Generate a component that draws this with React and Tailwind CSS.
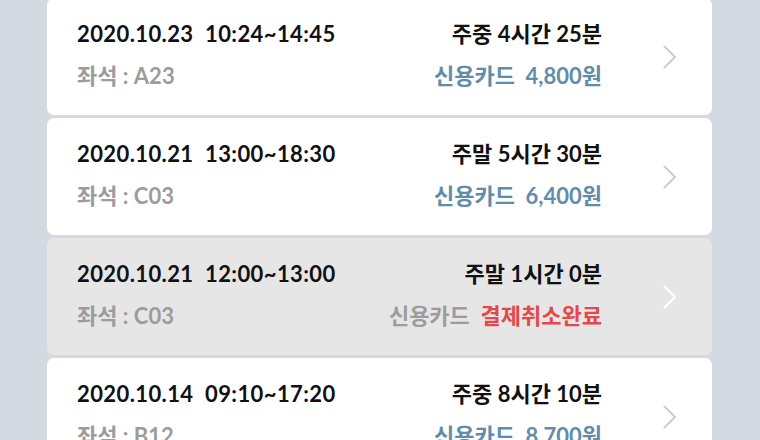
const rows = [
  { date: "2020.10.23", time: "10:24~14:45", seat: "A23", dur: "주중 4시간 25분", price: "4,800원" },
  { date: "2020.10.21", time: "13:00~18:30", seat: "C03", dur: "주말 5시간 30분", price: "6,400원" },
  { date: "2020.10.21", time: "12:00~13:00", seat: "C03", dur: "주말 1시간 0분", canceled: true },
  { date: "2020.10.14", time: "09:10~17:20", seat: "B12", dur: "주중 8시간 10분", price: "8,700원" },
];

function Chevron({ color }) {
  return (
    <svg width="14" height="24" viewBox="0 0 14 24" fill="none" className={color}>
      <polyline points="1.5,1.5 12,12 1.5,22.5" stroke="currentColor" strokeWidth="2" strokeLinecap="round" strokeLinejoin="round" />
    </svg>
  );
}

function UsageRow({ row }) {
  return (
    <div
      className={
        "flex items-center h-[117px] rounded-[7px] pl-[30px] pr-[35px] " +
        (row.canceled ? "bg-[#e6e6e6]" : "bg-white")
      }
    >
      <div className="flex-1 flex flex-col gap-[16px] pb-[3px]">
        <div className="flex justify-between text-[22px] font-bold text-[#111] leading-[26px]">
          <span className="whitespace-pre tracking-[0.4px]">{row.date + "  " + row.time}</span>
          <span>{row.dur}</span>
        </div>
        <div className="flex justify-between text-[22px] font-bold leading-[26px]">
          <span className="text-[#9c9c9c]">좌석 : {row.seat}</span>
          {row.canceled ? (
            <span className="whitespace-pre">
              <span className="text-[#9c9c9c]">신용카드  </span>
              <span className="text-[#e54848]">결제취소완료</span>
            </span>
          ) : (
            <span className="text-[#5f8dab] whitespace-pre">{"신용카드  " + row.price}</span>
          )}
        </div>
      </div>
      <div className="ml-[61px]">
        <Chevron color={row.canceled ? "text-white" : "text-[#cccccc]"} />
      </div>
    </div>
  );
}

export default function App() {
  return (
    <div
      className="w-[760px] h-[440px] overflow-hidden bg-[#d3dae2]"
      style={{ fontFamily: 'Lato, "Noto Sans CJK KR", sans-serif' }}
    >
      <div className="ml-[47px] w-[665px] mt-[-2px] flex flex-col gap-[3px]">
        {rows.map((r, i) => (
          <UsageRow key={i} row={r} />
        ))}
      </div>
    </div>
  );
}
